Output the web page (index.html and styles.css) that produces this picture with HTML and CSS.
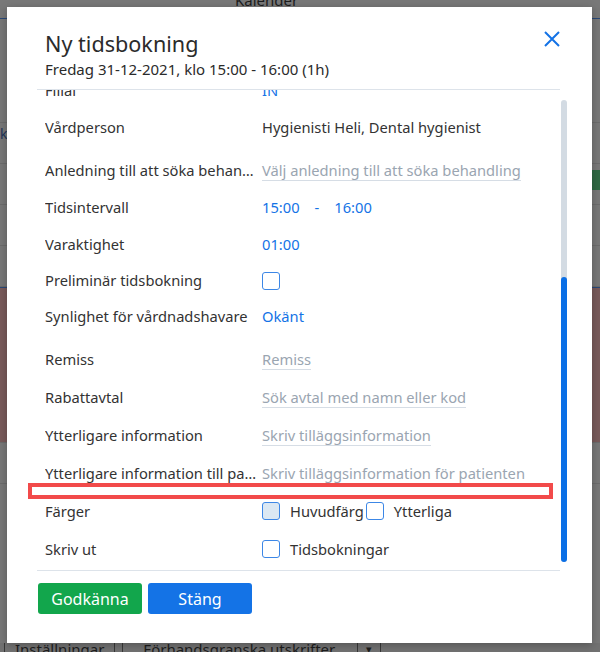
FILE: index.html
```html
<!DOCTYPE html>
<html lang="sv">
<head>
    <meta charset="UTF-8">
    <meta name="viewport" content="width=device-width, initial-scale=1.0">
    <title>Ny tidsbokning</title>
    <link rel="stylesheet" href="styles.css">
</head>
<body>
    <div class="app">
        <div class="topbar"><span class="topbar-title">Kalender</span></div>
        <div class="calendar">
            <div class="cal-line cal-line-blue"></div>
            <div class="cal-rows">
                <div class="cal-row"><span class="cal-label">k</span></div>
                <div class="cal-row"></div>
                <div class="cal-row cal-green"></div>
                <div class="cal-row"></div>
                <div class="cal-row"></div>
                <div class="cal-row cal-red"></div>
                <div class="cal-row"></div>
            </div>
        </div>
        <div class="bottombar">
            <span class="bb-btn">Inställningar</span>
            <span class="bb-btn bb-wide">Förhandsgranska utskrifter</span>
            <span class="bb-drop">▾</span>
        </div>
    </div>

    <div class="backdrop"></div>

    <div class="modal">
        <header class="modal-header">
            <div>
                <h1>Ny tidsbokning</h1>
                <p class="subtitle">Fredag 31-12-2021, klo 15:00 - 16:00 (1h)</p>
            </div>
            <button class="close" aria-label="Stäng">
                <svg width="16" height="16" viewBox="0 0 16 16">
                    <path d="M1 1 L15 15 M15 1 L1 15" stroke="#1473e6" stroke-width="2" fill="none"/>
                </svg>
            </button>
        </header>

        <div class="modal-body">
            <div class="rows-viewport">
                <div class="rows">
                    <div class="row">
                        <span class="label">Filial</span>
                        <span class="value link">IN</span>
                    </div>
                    <div class="row">
                        <span class="label">Vårdperson</span>
                        <span class="value">Hygienisti Heli, Dental hygienist</span>
                    </div>
                    <div class="row row-field group-start">
                        <span class="label">Anledning till att söka behandling</span>
                        <span class="field">Välj anledning till att söka behandling</span>
                    </div>
                    <div class="row">
                        <span class="label">Tidsintervall</span>
                        <span class="value link">15:00</span>
                        <span class="dash">-</span>
                        <span class="value link">16:00</span>
                    </div>
                    <div class="row">
                        <span class="label">Varaktighet</span>
                        <span class="value link">01:00</span>
                    </div>
                    <div class="row row-check">
                        <span class="label">Preliminär tidsbokning</span>
                        <span class="checkbox"></span>
                    </div>
                    <div class="row">
                        <span class="label">Synlighet för vårdnadshavare</span>
                        <span class="value link">Okänt</span>
                    </div>
                    <div class="row row-field group-start">
                        <span class="label">Remiss</span>
                        <span class="field">Remiss</span>
                    </div>
                    <div class="row row-field">
                        <span class="label">Rabattavtal</span>
                        <span class="field">Sök avtal med namn eller kod</span>
                    </div>
                    <div class="row row-field">
                        <span class="label">Ytterligare information</span>
                        <span class="field">Skriv tilläggsinformation</span>
                    </div>
                    <div class="row row-field">
                        <span class="label">Ytterligare information till patienten</span>
                        <span class="field">Skriv tilläggsinformation för patienten</span>
                    </div>
                    <div class="row row-field">
                        <span class="label">Färger</span>
                        <span class="checkbox checkbox-filled"></span>
                        <span class="check-text">Huvudfärg</span>
                        <span class="checkbox"></span>
                        <span class="check-text">Ytterliga</span>
                    </div>
                    <div class="row row-field">
                        <span class="label">Skriv ut</span>
                        <span class="checkbox"></span>
                        <span class="check-text">Tidsbokningar</span>
                    </div>
                </div>
            </div>
            <div class="scrollbar"><div class="scroll-thumb"></div></div>
        </div>

        <footer class="modal-footer">
            <button class="btn btn-green">Godkänna</button>
            <button class="btn btn-blue">Stäng</button>
        </footer>
    </div>

    <div class="highlight-box"></div>
</body>
</html>
```

FILE: styles.css
```css
body {
    margin: 0;
    width: 600px;
    height: 652px;
    overflow: hidden;
    position: relative;
    font-family: 'Noto Sans', sans-serif;
    color: #333;
    background-color: #7a7a7a;
}

/* sidan bakom dialogen */
.app {
    height: 652px;
    display: flex;
    flex-direction: column;
}
.topbar {
    height: 8px;
    overflow: hidden;
    background-color: #7b7b7b;
}
.topbar-title {
    display: block;
    margin: -10px 0 0 235px;
    font-size: 15px;
    line-height: 20px;
    color: #1e1e1e;
}
.calendar {
    flex: 1;
    display: flex;
    flex-direction: column;
}
.cal-line {
    height: 1px;
    margin-top: 10px;
}
.cal-line-blue {
    background-color: #2a4a7a;
}
.cal-rows {
    flex: 1;
    display: flex;
    flex-direction: column;
    padding-top: 63px;
}
.cal-row {
    height: 40px;
    border-bottom: 1px solid #6e6e6e;
}
.cal-label {
    display: block;
    padding-top: 42px;
    font-size: 14px;
    color: #23355a;
}
.cal-green {
    background: linear-gradient(to right, transparent 592px, #2f6b44 592px) 0 6px / 100% 20px no-repeat;
}
.cal-red {
    height: 154px;
    background-color: #7b5c5c;
    border-top: 1px solid #2a4a7a;
}
.bottombar {
    height: 9px;
    display: flex;
    align-items: flex-start;
    gap: 7px;
    padding-left: 4px;
    overflow: hidden;
    font-size: 15px;
    background-color: #747474;
}
.bb-btn {
    padding: 0 10px;
    line-height: 22px;
    margin-top: -6px;
    border: 1px solid #3a3a3a;
    border-radius: 4px;
    color: #1e1e1e;
}
.bb-wide {
    padding: 0 22px 0 20px;
    border-radius: 4px 0 0 4px;
}
.bb-drop {
    margin: -6px 0 0 -7px;
    padding: 0 8px;
    line-height: 22px;
    border: 1px solid #3a3a3a;
    border-left: none;
    color: #1e1e1e;
    font-size: 11px;
}

/* dialog */
.backdrop {
    position: absolute;
    inset: 0;
    background-color: rgba(0, 0, 0, 0.02);
}
.modal {
    position: absolute;
    left: 7px;
    top: 7px;
    width: 585px;
    height: 636px;
    box-sizing: border-box;
    padding: 0 25px 0 30px;
    background-color: #ffffff;
    box-shadow: 0 2px 8px rgba(0, 0, 0, 0.25);
    display: flex;
    flex-direction: column;
}
.modal-header {
    display: flex;
    justify-content: space-between;
    align-items: flex-start;
    margin-right: 7px;
    padding: 23px 0 10px 8px;
    border-bottom: 1px solid #dde3ea;
}
.modal-header h1 {
    margin: 0;
    font-size: 21.6px;
    font-weight: 400;
    line-height: 28px;
    color: #2b2b2b;
}
.subtitle {
    margin: 1px 0 0;
    font-size: 15px;
    line-height: 20px;
    color: #2b2b2b;
}
.close {
    margin: 1px 0 0;
    padding: 0;
    border: none;
    background: none;
    cursor: pointer;
}

.modal-body {
    height: 480px;
    display: flex;
}
.rows-viewport {
    flex: 1;
    overflow: hidden;
}
.rows {
    margin-top: -18px;
}
.row {
    display: flex;
    align-items: center;
    height: 37px;
    padding-left: 8px;
    font-size: 14.7px;
    line-height: 21px;
}
.row-field {
    height: 38px;
}
.row-check {
    height: 35px;
}
.group-start {
    margin-top: 5px;
}
.label {
    width: 213px;
    flex-shrink: 0;
    margin-right: 4px;
    white-space: nowrap;
    overflow: hidden;
    text-overflow: ellipsis;
    color: #333;
}
.value {
    color: #333;
}
.link {
    color: #1473e6;
}
.dash {
    margin: 0 15px;
    color: #1473e6;
}
.field {
    display: inline-block;
    line-height: 20px;
    border-bottom: 1px solid #d6dde5;
    color: #9aa5b1;
}
.checkbox {
    width: 16px;
    height: 16px;
    flex-shrink: 0;
    border: 1.5px solid #3c87e6;
    border-radius: 3px;
    background-color: #ffffff;
}
.checkbox-filled {
    background-color: #dbe8f3;
}
.check-text {
    margin: 0 2px 0 10px;
    color: #333;
}

.scrollbar {
    width: 6px;
    margin: 10px 0 8px 1px;
    border-radius: 3px;
    background-color: #d3dbe3;
    display: flex;
    flex-direction: column;
    justify-content: flex-end;
}
.scroll-thumb {
    height: 285px;
    border-radius: 3px;
    background-color: #0a6fe6;
}

.modal-footer {
    margin-right: 7px;
    padding: 12px 0 0 1px;
    border-top: 1px solid #dde3ea;
    display: flex;
    gap: 6px;
}
.btn {
    width: 104px;
    height: 31px;
    border: none;
    border-radius: 3px;
    font-family: 'Noto Sans', sans-serif;
    font-size: 16px;
    color: #ffffff;
    cursor: pointer;
}
.btn-green {
    background-color: #12a64c;
}
.btn-blue {
    background-color: #1473e6;
}

/* markering ovanpå dialogen */
.highlight-box {
    position: absolute;
    left: 28px;
    top: 483px;
    width: 525px;
    height: 16px;
    box-sizing: border-box;
    border: 4px solid #f24a4a;
}
```
